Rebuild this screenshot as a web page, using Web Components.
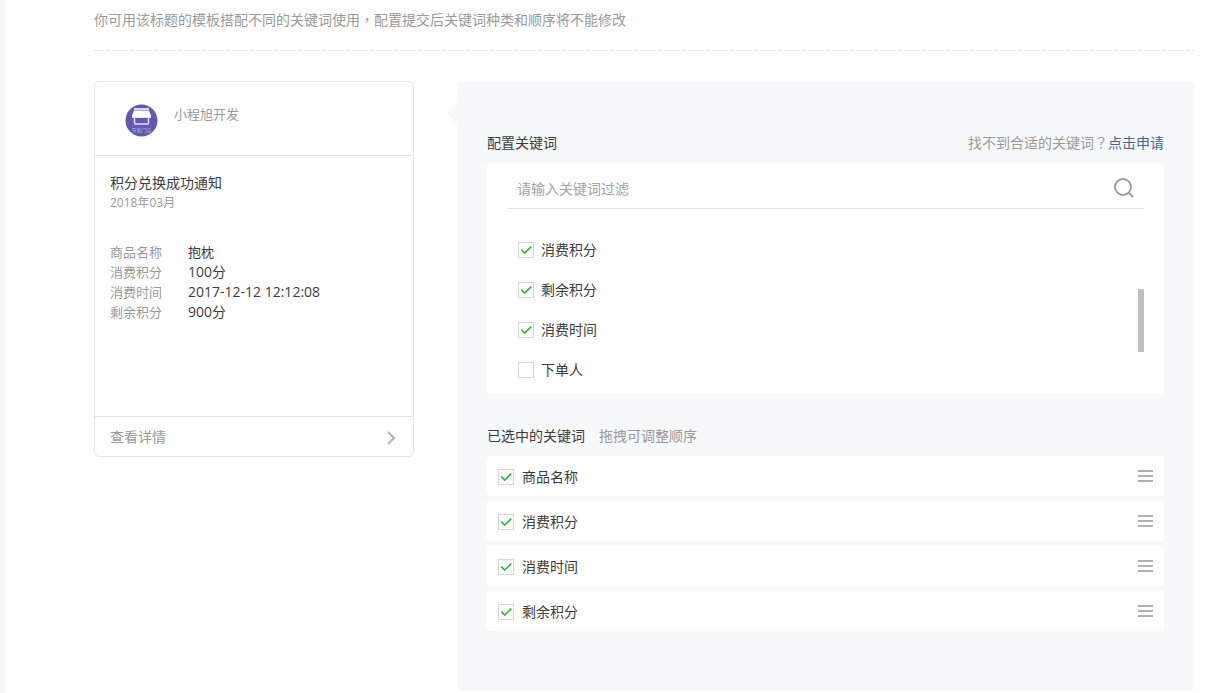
<!DOCTYPE html>
<html lang="zh-CN">
<head>
<meta charset="utf-8">
<meta name="viewport" content="width=device-width, initial-scale=1">
<title>配置关键词</title>
<style>
html,body{margin:0;height:100%}
body{font:14px/20px "Open Sans","Noto Sans CJK SC",sans-serif;color:#3c3c3c;background:#fff;overflow-x:hidden}
</style>
</head>
<body>
<template-config></template-config>
<script>
const define = (name, html, setup) => customElements.define(name, class extends HTMLElement {
  constructor() {
    super();
    const t = document.createElement('template');
    t.innerHTML = '<style>*{box-sizing:border-box}:host([hidden]){display:none}</style>' + html;
    this.attachShadow({mode: 'open'}).append(t.content.cloneNode(true));
  }
  connectedCallback() { if (setup) setup(this, this.shadowRoot); }
});

/* Tick box with its label */
define('key-check', `
<style>
:host{display:block}
label{display:flex;align-items:center;gap:var(--check-gap,7px);cursor:pointer}
.box{display:grid;width:16px;height:16px}
input,svg{grid-area:1/1;width:16px;height:16px;margin:0}
input{appearance:none;border:1px solid #d6d6d6;background:#fff}
svg{pointer-events:none;visibility:hidden}
input:checked + svg{visibility:visible}
</style>
<label><span class="box"><input type="checkbox"><svg viewBox="0 0 16 16" fill="none" stroke="#30b93c" stroke-width="1.7" aria-hidden="true"><path d="M3.3 7.7 6.7 11 13.3 4.6"/></svg></span><span><slot></slot></span></label>`,
(el, root) => { root.querySelector('input').checked = el.hasAttribute('checked'); });

/* One line of the notification sample */
define('detail-row', `
<style>
:host{display:flex;font-size:13px;line-height:20px}
.name{flex:none;width:78px;color:#9a9a9a}
:host([numeric]) .value{font-size:14px}
</style>
<span class="name"><slot name="name"></slot></span><span class="value"><slot></slot></span>`);

/* Preview of the message */
define('message-card', `
<style>
:host{display:flex;flex-direction:column;border:1px solid #e7e7e7;border-radius:5px;background:#fff}
header{display:flex;gap:16px;height:74px;padding:22px 30px 0;border-bottom:1px solid #e4e4e4;color:#9a9a9a;font-size:13px}
header svg{flex:none;width:33px;height:33px}
main{padding:17px 15px 0;height:260px}
h2{margin:0;font-size:14px;font-weight:400;line-height:20px}
time{display:block;font-size:12px;line-height:20px;color:#9a9a9a;margin-bottom:29px}
a{display:flex;align-items:center;justify-content:space-between;height:40px;padding:0 16px 0 15px;border-top:1px solid #e4e4e4;color:#9a9a9a;text-decoration:none}
a svg{width:12px;height:16px}
</style>
<header>
<svg viewBox="0 0 33 33" aria-hidden="true"><circle cx="16.5" cy="16.5" r="16" fill="#6259b3"/>
<path d="M9 4h15v2H9z" fill="#d9d6ee"/><path d="M9 6.500h15l2 5v2q-1.500 1-3 0-1.600 1-3.200 0-1.600 1-3.300 0-1.600 1-3.300 0-1.600 1-3.200 0-1.500 1-3 0v-2z" fill="#fff"/>
<path d="M9.500 13v6q0 1 1 1h12q1 0 1-1v-6" fill="none" stroke="#e4e1f4" stroke-width="1.500"/>
<text x="16.500" y="28" text-anchor="middle" font-size="5" fill="#b9b3dd" font-family="Noto Sans CJK SC, sans-serif">万能门店</text></svg>
<span>小程旭开发</span>
</header>
<main><h2>积分兑换成功通知</h2><time datetime="2018-03">2018年03月</time><slot></slot></main>
<a href="#"><span>查看详情</span><svg viewBox="0 0 12 16" fill="none" stroke="#b2b2b2" stroke-width="2" aria-hidden="true"><path d="M3 3l6 6-6 6"/></svg></a>`);

/* Filter field above the keyword list */
define('keyword-search', `
<style>
:host{display:flex;align-items:center;height:46px;padding:4px 10px 0;border-bottom:1px solid #e4e4e4}
input{flex:1;min-width:0;height:28px;padding:2px 0 0;border:0;outline:0;background:none;color:#353535;font:inherit}
input::placeholder{color:#a3a3a3;opacity:1}
button{flex:none;width:20px;height:20px;padding:0;border:0;background:none}
svg{display:block;width:20px;height:20px}
</style>
<input type="text" aria-label="关键词过滤" placeholder="请输入关键词过滤">
<button type="button" aria-label="搜索"><svg viewBox="0 0 20 20" fill="none" stroke="#999" stroke-width="1.800"><circle cx="9" cy="9" r="8"/><path d="M14.500 14.500 19 19"/></svg></button>`);

define('keyword-picker', `
<style>
:host{display:block;position:relative;padding:0 20px 4px;background:#fff;border-radius:4px}
.list{display:grid;grid-auto-rows:40px;align-items:center;padding:21px 11px 0}
.thumb{position:absolute;right:20px;top:126px;width:6px;height:63px;background:#c1c1c1}
</style>
<keyword-search></keyword-search><div class="list"><slot></slot></div><div class="thumb"></div>`);

/* Draggable chosen keyword */
define('chosen-keyword', `
<style>
:host{display:flex;align-items:center;justify-content:space-between;height:40px;padding:0 11px;background:#fff;border-radius:3px;--check-gap:8px}
key-check{padding-top:2px}
button{width:15px;height:14px;padding:0;border:0;background:none;cursor:move}
svg{display:block;width:15px;height:14px}
</style>
<key-check checked><slot></slot></key-check>
<button type="button" aria-label="拖拽排序"><svg viewBox="0 0 15 14" fill="#b0b0b0"><path d="M0 1h15v2H0zM0 6h15v2H0zM0 11h15v2H0z"/></svg></button>`);

/* Grey panel */
define('config-panel', `
<style>
:host{display:block;position:relative;padding:52px 30px 60px;background:#f6f8fa;border-radius:5px}
.arrow{position:absolute;left:-11px;top:21px;width:11px;height:22px;background:#f6f8fa;clip-path:polygon(0 50%,100% 0,100% 100%)}
.title{display:flex;justify-content:space-between;margin-bottom:10px}
h3{margin:0;font-size:14px;font-weight:400}
.hint{color:#9a9a9a}
.mark{font-family:"Noto Sans CJK TC",sans-serif;line-height:1}
a{color:#4a639b;text-decoration:none}
.chosen-title{display:flex;gap:14px;margin:32px 0 10px}
.chosen{display:grid;gap:5px}
</style>
<div class="arrow"></div>
<div class="title"><h3>配置关键词</h3><span class="hint">找不到合适的关键词<span class="mark" lang="zh-TW">？</span><a href="#">点击申请</a></span></div>
<keyword-picker>
<key-check checked>消费积分</key-check><key-check checked>剩余积分</key-check><key-check checked>消费时间</key-check><key-check>下单人</key-check>
</keyword-picker>
<div class="chosen-title"><h3>已选中的关键词</h3><span class="hint">拖拽可调整顺序</span></div>
<div class="chosen"><chosen-keyword>商品名称</chosen-keyword><chosen-keyword>消费积分</chosen-keyword><chosen-keyword>消费时间</chosen-keyword><chosen-keyword>剩余积分</chosen-keyword></div>`);

/* Page */
define('template-config', `
<style>
:host{display:block;box-sizing:border-box;min-height:100%;padding:10px 22px 2px 89px;border-left:5px solid #f6f8fa}
p{margin:0;padding-bottom:20px;color:#9a9a9a}
.mark{font-family:"Noto Sans CJK TC",sans-serif;line-height:1}
.rule{height:1px;margin-bottom:30px;background:repeating-linear-gradient(90deg,#e2e2e2 0 4px,transparent 4px 6px)}
.columns{display:grid;grid-template-columns:320px minmax(0,1fr);gap:43px;align-items:start}
</style>
<p>你可用该标题的模板搭配不同的关键词使用<span class="mark" lang="zh-TW">，</span>配置提交后关键词种类和顺序将不能修改</p>
<div class="rule"></div>
<div class="columns">
<message-card>
<detail-row><span slot="name">商品名称</span>抱枕</detail-row>
<detail-row numeric><span slot="name">消费积分</span>100分</detail-row>
<detail-row numeric><span slot="name">消费时间</span>2017-12-12 12:12:08</detail-row>
<detail-row numeric><span slot="name">剩余积分</span>900分</detail-row>
</message-card>
<config-panel></config-panel>
</div>`);
</script>
</body>
</html>
